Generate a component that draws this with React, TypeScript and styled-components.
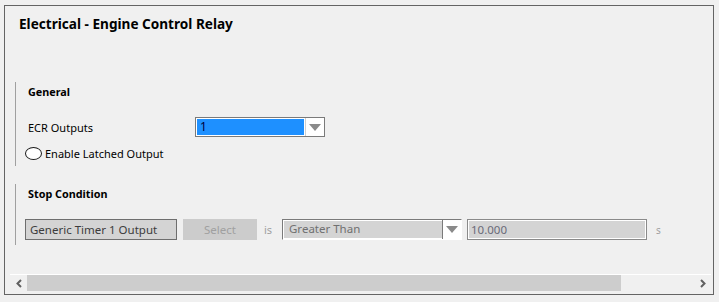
import React from 'react';
import styled, { createGlobalStyle } from 'styled-components';

const GlobalStyle = createGlobalStyle`
  html, body {
    margin: 0;
    padding: 0;
    background: #f0f0f0;
  }
  body {
    font-family: 'Noto Sans', 'Open Sans', sans-serif;
    font-size: 11px;
    color: #000;
  }
`;

const App: React.FC = () => {
  return (
    <>
      <GlobalStyle />
      <Frame>
        <Content>
          <Title>Electrical - Engine Control Relay</Title>

          <Section>
            <SectionTitle>General</SectionTitle>
            <FieldRow>
              <Label>ECR Outputs</Label>
              <Combo>
                <ComboValue>1</ComboValue>
                <ComboArrow>
                  <Triangle />
                </ComboArrow>
              </Combo>
            </FieldRow>
            <ToggleRow>
              <Toggle />
              <span>Enable Latched Output</span>
            </ToggleRow>
          </Section>

          <Section $gap={18}>
            <SectionTitle>Stop Condition</SectionTitle>
            <ConditionRow>
              <TextBox>Generic Timer 1 Output</TextBox>
              <SelectButton>Select</SelectButton>
              <Muted>is</Muted>
              <DisabledCombo>
                <DisabledValue>Greater Than</DisabledValue>
                <ComboArrow $disabled>
                  <Triangle />
                </ComboArrow>
              </DisabledCombo>
              <NumberBox>10.000</NumberBox>
              <Unit>s</Unit>
            </ConditionRow>
          </Section>
        </Content>

        <ScrollBar>
          <ScrollArrow>
            <svg width='8' height='9' viewBox='0 0 8 9'>
              <path d='M6 1 L2.5 4.5 L6 8' fill='none' stroke='#606060' strokeWidth='2' />
            </svg>
          </ScrollArrow>
          <Track>
            <Thumb />
          </Track>
          <ScrollArrow>
            <svg width='8' height='9' viewBox='0 0 8 9'>
              <path d='M2 1 L5.5 4.5 L2 8' fill='none' stroke='#606060' strokeWidth='2' />
            </svg>
          </ScrollArrow>
        </ScrollBar>
      </Frame>
    </>
  );
};

const Frame = styled.div`
  box-sizing: border-box;
  margin: 5px 0 0 4px;
  width: 710px;
  height: 290px;
  border: 1px solid #646464;
  display: flex;
  flex-direction: column;
`;

const Content = styled.div`
  flex: 1;
  padding: 9px 0 0 10px;
`;

const Title = styled.h1`
  margin: 0 0 0 4px;
  font-size: 13.6px;
  line-height: 18px;
  font-weight: 700;
  height: 67px;
`;

const Section = styled.div<{ $gap?: number }>`
  margin-top: ${(props) => props.$gap ?? 0}px;
  border-left: 1px solid #a0a0a0;
  padding: 0 0 5px 12px;
`;

const SectionTitle = styled.div`
  font-size: 10.8px;
  font-weight: 700;
  line-height: 16px;
  margin-bottom: 17px;
  padding-top: 2px;
`;

const FieldRow = styled.div`
  display: flex;
  align-items: center;
  height: 20px;
`;

const Label = styled.span`
  width: 167px;
`;

const Combo = styled.div`
  box-sizing: border-box;
  width: 130px;
  height: 20px;
  border: 1px solid #7a7a7a;
  display: flex;
  background: #fff;
`;

const ComboValue = styled.div`
  flex: 1;
  margin: 1px;
  background: #1e90ff;
  color: #000040;
  padding-left: 3px;
  line-height: 16px;
  font-size: 12px;
`;

const ComboArrow = styled.div<{ $disabled?: boolean }>`
  width: 18px;
  background: #fff;
  border-left: 1px solid ${(props) => (props.$disabled ? '#7a7a7a' : '#d0d0d0')};
  display: flex;
  align-items: center;
  justify-content: center;
`;

const Triangle = styled.div`
  width: 0;
  height: 0;
  border-left: 6px solid transparent;
  border-right: 6px solid transparent;
  border-top: 7px solid #8a8a8a;
`;

const ToggleRow = styled.div`
  display: flex;
  align-items: center;
  margin: 9px 0 1px -3px;
  height: 14px;
`;

const Toggle = styled.span`
  box-sizing: border-box;
  width: 17px;
  height: 13px;
  border: 1px solid #1a1a1a;
  border-radius: 50%;
  background: #fff;
  margin-right: 3px;
`;

const ConditionRow = styled.div`
  display: flex;
  align-items: center;
  margin-left: -3px;
  margin-top: 6px;
  height: 21px;
`;

const TextBox = styled.div`
  box-sizing: border-box;
  width: 152px;
  height: 21px;
  border: 1px solid #6e6e6e;
  background: #d4d4d4;
  color: #3c3c3c;
  padding-left: 4px;
  line-height: 19px;
  font-size: 11.5px;
`;

const SelectButton = styled.div`
  box-sizing: border-box;
  width: 74px;
  height: 21px;
  margin-left: 6px;
  background: #cccccc;
  color: #a0a0a0;
  text-align: center;
  line-height: 21px;
  font-size: 11.5px;
`;

const Muted = styled.span`
  box-sizing: border-box;
  width: 25px;
  padding-left: 7px;
  color: #a0a0a0;
`;

const DisabledCombo = styled.div`
  box-sizing: border-box;
  width: 180px;
  height: 21px;
  display: flex;
  border: 1px solid #7a7a7a;
  border-right-color: #fff;
  border-bottom-color: #fff;
  box-shadow: inset 0 0 0 1px #ffffff;
`;

const DisabledValue = styled.div`
  flex: 1;
  margin: 1px 0 1px 1px;
  background: #d4d4d4;
  color: #707070;
  padding-left: 5px;
  line-height: 16px;
  font-size: 11.5px;
`;

const NumberBox = styled.div`
  box-sizing: border-box;
  width: 180px;
  height: 21px;
  margin-left: 5px;
  border: 1px solid #8a8a8a;
  box-shadow: inset 0 0 0 1px #ffffff;
  background: #d4d4d4;
  color: #6a6a78;
  padding-left: 3px;
  line-height: 19px;
  font-size: 11.5px;
`;

const Unit = styled.span`
  margin-left: 9px;
  color: #a0a0a0;
  font-size: 10px;
`;

const ScrollBar = styled.div`
  display: flex;
  align-items: stretch;
  height: 16px;
  margin: 0 2px 3px 5px;
  border-top: 1px solid #ffffff;
`;

const ScrollArrow = styled.div`
  width: 17px;
  display: flex;
  align-items: center;
  justify-content: center;
`;

const Track = styled.div`
  flex: 1;
  display: flex;
`;

const Thumb = styled.div`
  width: 594px;
  background: #cdcdcd;
`;

export default App;
